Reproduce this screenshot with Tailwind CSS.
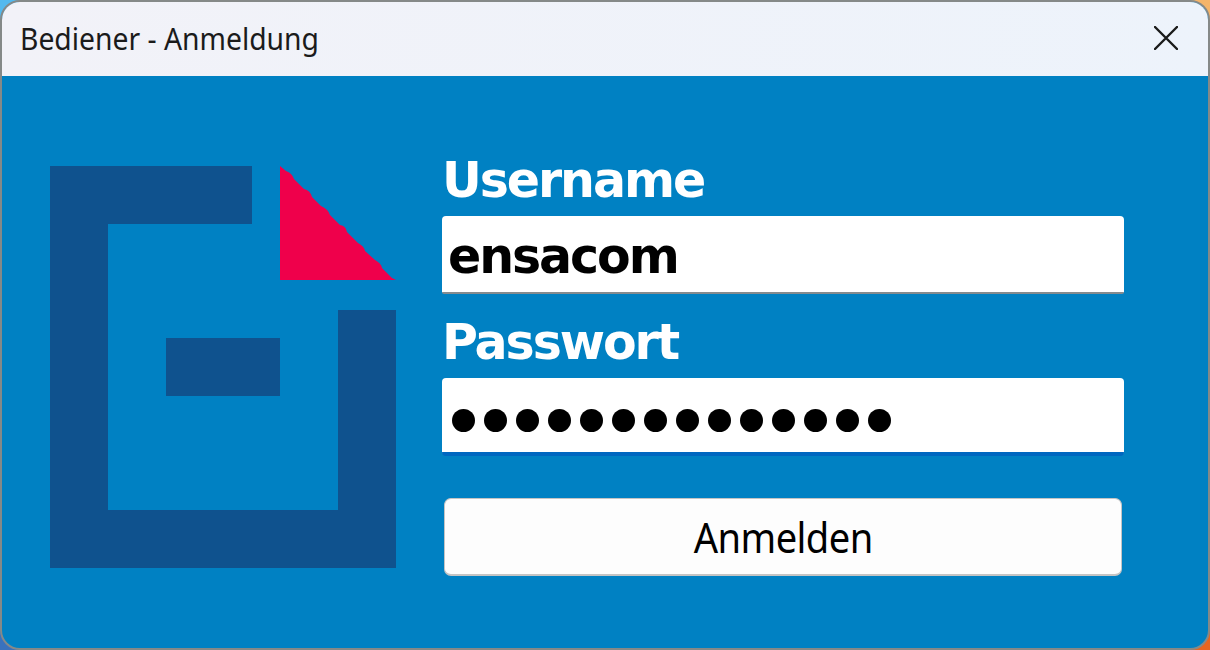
<!DOCTYPE html>
<html lang="de">
<head>
<meta charset="utf-8">
<title>Bediener - Anmeldung</title>
<script src="https://cdn.jsdelivr.net/npm/@tailwindcss/browser@4"></script>
</head>
<body class="h-[650px] w-[1210px] overflow-hidden bg-[conic-gradient(at_50%_50%,#f5b56a_0deg_90deg,#e8651f_90deg_180deg,#3a72bd_180deg_270deg,#54b9ee_270deg_360deg)]">
<main class="flex h-[650px] w-[1210px] flex-col overflow-hidden rounded-[20px] border-2 border-[#858988] bg-[#0081c3]">
  <header class="flex h-[74px] shrink-0 items-center justify-between bg-linear-to-r from-[#f2f2f8] to-[#edf3fb] pr-[30px] pl-[18px]">
    <h1 class="origin-left scale-x-[0.943] whitespace-nowrap font-['Noto_Sans',sans-serif] text-[30px] leading-[74px] text-[#1b1b1b]">Bediener - Anmeldung</h1>
    <button aria-label="Schließen" class="mt-[-2px]"><svg class="block" width="24" height="24" viewBox="0 0 24 24" fill="none" stroke="#1a1a1a" stroke-width="2.4" stroke-linecap="round"><path d="M1 1L23 23M23 1L1 23"/></svg></button>
  </header>
  <div class="flex grow pl-12">
    <svg class="mt-[90px] block shrink-0" width="346" height="402" viewBox="0 0 346 402">
      <path fill="#0f528e" d="M0 0H202V58H58V344H288V144H346V402H0ZM116 172H230V230H116Z"/>
      <path fill="#ef004b" d="M230 0L236 5Q242 7 244 13L254 23Q260 24 262 31L271 40Q278 43 280 49L290 59Q296 60 297 66L308 77Q314 80 315 85L325 94Q331 97 332 102L342 112L346 114H230Z"/>
    </svg>
    <form class="ml-[46px] flex w-[682px] flex-col pt-[74px] text-black" onsubmit="return false">
      <div class="h-[66px] text-white"><span class="inline-block origin-left scale-x-[0.98] font-['DejaVu_Sans',sans-serif] text-[50px] leading-[61px] font-bold tracking-[-2.1px]">Username</span></div>
      <div class="h-[78px] rounded-t-[4px] rounded-b-[2px] border-b-2 border-[#858b8f] bg-white pl-[6px]"><span class="inline-block origin-left scale-x-[0.98] font-['DejaVu_Sans',sans-serif] text-[50px] leading-[81px] font-bold tracking-[-2.1px]">ensacom</span></div>
      <div class="mt-[18px] h-[66px] text-white"><span class="inline-block origin-left scale-x-[0.98] font-['DejaVu_Sans',sans-serif] text-[50px] leading-[61px] font-bold tracking-[-2.1px]">Passwort</span></div>
      <div class="flex h-[78px] items-center gap-[9px] rounded-t-[4px] rounded-b-[4px] border-b-4 border-[#0067c0] bg-white pt-[11px] pl-[10px]">
        <i class="size-[23px] rounded-full bg-black"></i><i class="size-[23px] rounded-full bg-black"></i><i class="size-[23px] rounded-full bg-black"></i><i class="size-[23px] rounded-full bg-black"></i><i class="size-[23px] rounded-full bg-black"></i><i class="size-[23px] rounded-full bg-black"></i><i class="size-[23px] rounded-full bg-black"></i><i class="size-[23px] rounded-full bg-black"></i><i class="size-[23px] rounded-full bg-black"></i><i class="size-[23px] rounded-full bg-black"></i><i class="size-[23px] rounded-full bg-black"></i><i class="size-[23px] rounded-full bg-black"></i><i class="size-[23px] rounded-full bg-black"></i><i class="size-[23px] rounded-full bg-black"></i>
      </div>
      <button class="mt-[42px] ml-[2px] flex h-[78px] w-[678px] items-center justify-center rounded-[7px] border border-b-2 border-[#c4c4c4] bg-[#fdfdfd]"><span class="inline-block scale-x-[0.93] font-['Noto_Sans',sans-serif] text-[41px] leading-[74px] tracking-[-0.6px]">Anmelden</span></button>
    </form>
  </div>
</main>
</body>
</html>
